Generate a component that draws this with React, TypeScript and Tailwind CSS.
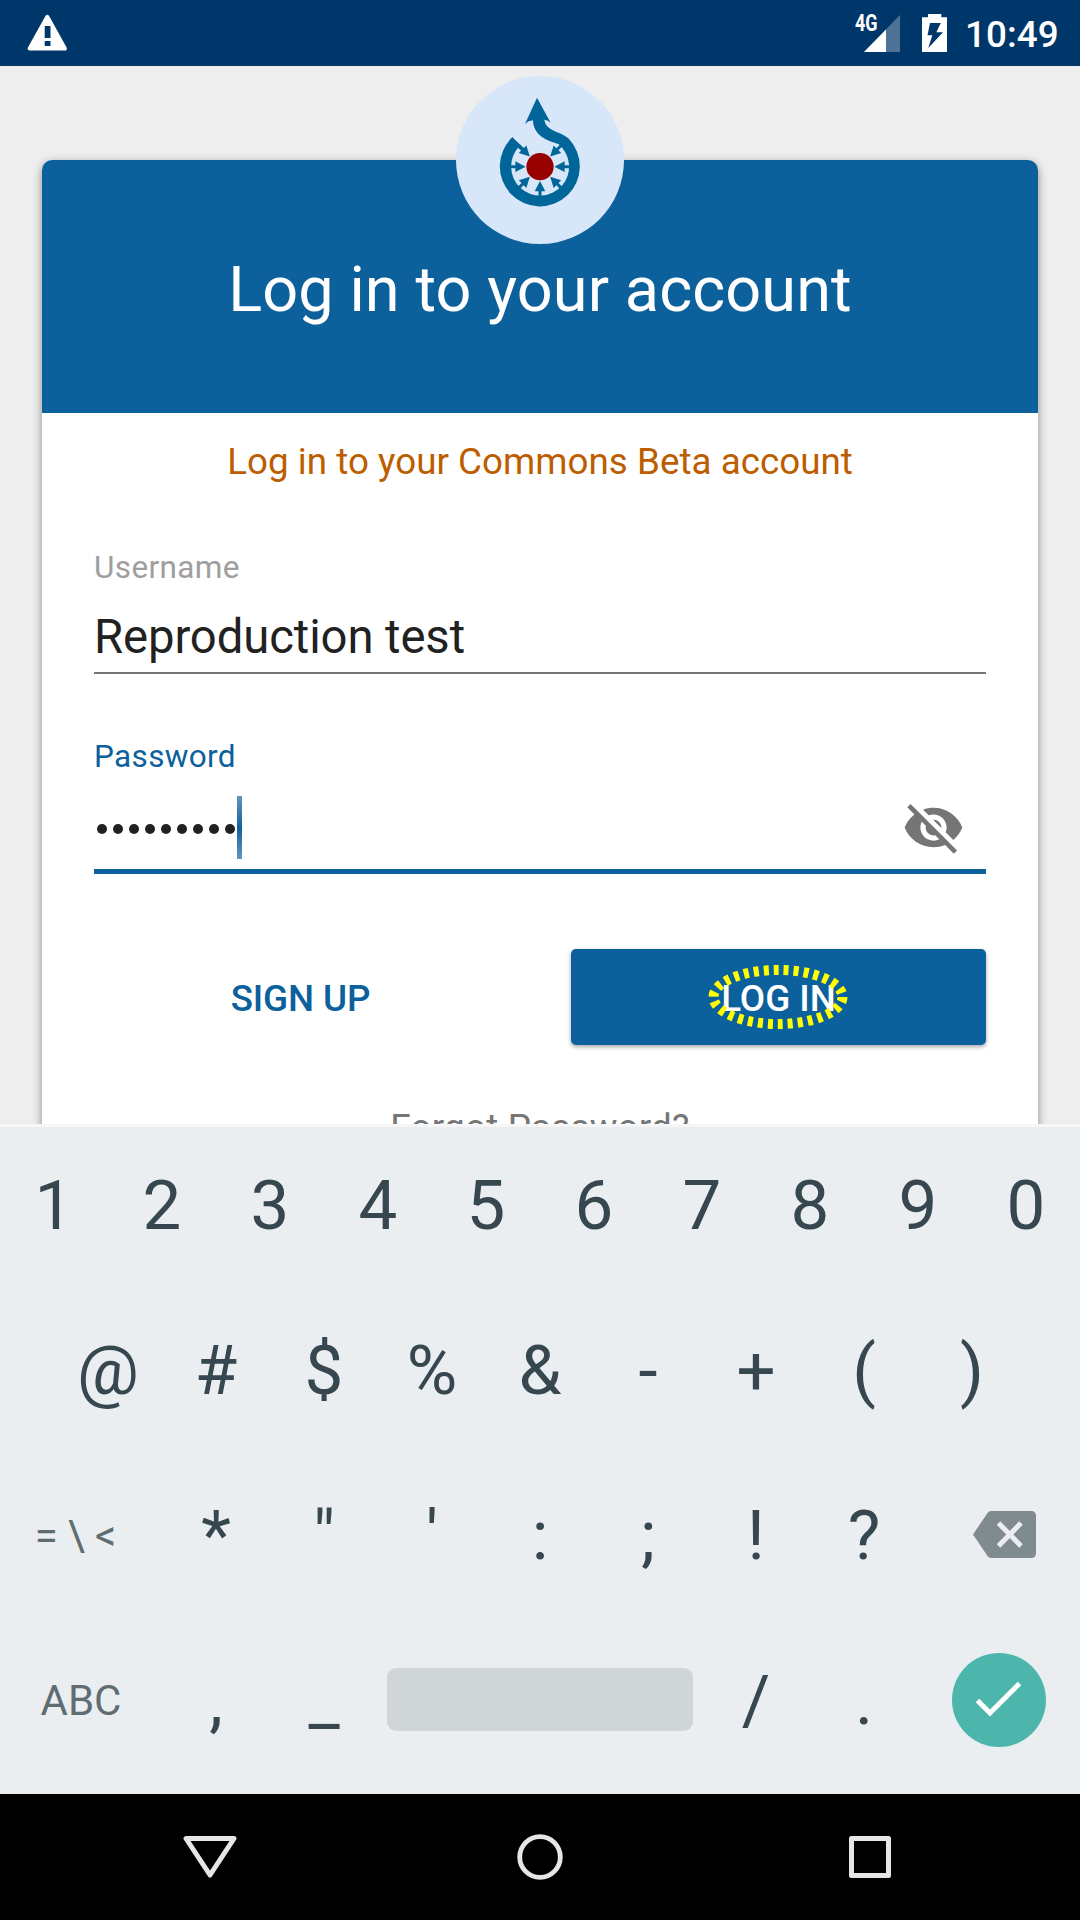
import React from "react";

function StatusBar() {
  return (
    <header className="flex h-[66px] shrink-0 items-start bg-[#00376b] text-white">
      <svg className="ml-[27px] mt-[14px] h-[37px] w-[41px]" viewBox="0 0 41 37">
        <path
          fillRule="evenodd"
          fill="#fff"
          d="M18.6 1.8 Q20.3 -0.4 22 1.8 L39.6 33.5 Q40.6 36.4 38 36.4 H2.8 Q-.2 36.4 .9 33.5Z M17.7 12 V24 H23.5 V12Z M17.7 27 V32 H23.5 V27Z"
        />
      </svg>
      <div className="relative ml-[796px] mt-[15px] h-[37px] w-[36px]">
        <svg className="h-[37px] w-[36px]" viewBox="0 0 36 37">
          <path d="M36 0V37H0Z" fill="#4f7397" />
          <path d="M22 14.5V37H0Z" fill="#fff" />
        </svg>
        <span className="absolute -left-[9px] -top-[3px] origin-left scale-x-[.78] text-[23px] font-bold leading-[24px]">
          4G
        </span>
      </div>
      <svg className="ml-[22px] mt-[14px] h-[38px] w-[25px]" viewBox="0 0 25 38">
        <path
          fillRule="evenodd"
          fill="#fff"
          d="M6 0H19.300V3.300H25V38H0V3.300H6Z M8 9L5.500 21.300H10.300L6.300 34L21 18.300H14.300L18.800 9Z"
        />
      </svg>
      <span className="ml-[18px] mt-[13px] text-[36.75px] font-medium leading-[44px] tracking-[0.1px]">
        10:49
      </span>
    </header>
  );
}

function CommonsLogo() {
  const angles = [0, 45, 135, 180, 225, -45, -90];
  return (
    <svg className="h-[168px] w-[168px]" viewBox="48 48 504 504">
      <circle cx="300" cy="300" r="252" fill="#d7e7f9" />
      <path
        fill="#006699"
        d="M217 232A120 120 0 1 0 385 235C358 211 318 215 313 179Q324 180 332 188L291 113L255 192Q265 182 279 181C280 226 320 242 355 252A87 87 0 1 1 238 259Z"
      />
      {angles.map((a) => (
        <path
          key={a}
          fill="#006699"
          transform={`rotate(${a} 300 320)`}
          d="M257 320L226 304V315.500H208V324.500H226V336Z"
        />
      ))}
      <path d="M217 232L252 265L245 274L210 240Z" fill="#006699" />
      <circle cx="300" cy="320" r="41" fill="#990000" />
    </svg>
  );
}

function LoginCard() {
  return (
    <main className="relative h-[1058px] shrink-0 overflow-hidden bg-[#eeeeee] px-[42px] pt-[94px]">
      <section className="h-[1100px] overflow-clip rounded-t-[10px] bg-white shadow-[0_3px_10px_rgba(0,0,0,0.42)]">
        <h1 className="h-[253px] bg-[#0c609c] pt-[98px] text-center text-[63px] leading-[64px] tracking-[0.1px] text-white">
          Log in to your account
        </h1>
        <form className="px-[52px]">
          <p className="mt-[27px] text-center text-[36.75px] leading-[44px] tracking-[0.03px] text-[#bc5e00]">
            Log in to your Commons Beta account
          </p>
          <div className="mt-[66px] text-[31.5px] leading-[36px] tracking-[0.35px] text-[#9e9e9e]">
            Username
          </div>
          <div className="mt-[23px] text-[47.25px] leading-[56px] tracking-[-0.1px] text-[#212121]">
            Reproduction test
          </div>
          <div className="mt-[7px] h-[2px] bg-[#757575]" />
          <div className="mt-[65px] text-[31.5px] leading-[36px] tracking-[0.35px] text-[#0c609c]">
            Password
          </div>
          <div className="mt-[21px] flex h-[63px] items-center">
            <div className="flex gap-[6px] pl-[3px] pt-[2px]">
              {Array.from({ length: 9 }, (_, i) => (
                <i key={i} className="size-[10px] rounded-full bg-[#212121]" />
              ))}
            </div>
            <div className="ml-[2px] h-[63px] w-[5px] bg-linear-to-b from-[#5f97c0] via-[#0c609c] to-[#5f97c0]" />
            <svg className="ml-auto mr-[21px] size-[63px]" viewBox="0 0 24 24" fill="#757575">
              <path d="M12 7c2.760 0 5 2.240 5 5 0 .65-.13 1.260-.36 1.830l2.920 2.920c1.510-1.260 2.700-2.890 3.430-4.750-1.730-4.390-6-7.500-11-7.500-1.400 0-2.740.25-3.980.7l2.160 2.160C10.740 7.130 11.350 7 12 7zM2 4.270l2.280 2.280.46.46C3.080 8.300 1.780 10.020 1 12c1.730 4.390 6 7.500 11 7.500 1.550 0 3.030-.3 4.380-.84l.42.42L19.730 22 21 20.730 3.270 3 2 4.270zM7.530 9.800l1.550 1.550c-.05.21-.08.43-.08.65 0 1.660 1.340 3 3 3 .22 0 .44-.03.65-.08l1.550 1.550c-.67.33-1.410.53-2.200.53-2.760 0-5-2.240-5-5 0-.79.2-1.530.53-2.200zm4.310-.78l3.150 3.150.02-.16c0-1.660-1.340-3-3-3l-.17.01z" />
            </svg>
          </div>
          <div className="mt-[10px] h-[5px] bg-[#0c609c]" />
          <div className="mt-[75px] flex h-[96px] justify-between text-[36.75px] font-medium leading-[99px]">
            <button type="button" className="w-[415px] pr-[2px] tracking-[-0.1px] text-[#0c609c]">
              SIGN UP
            </button>
            <button
              type="button"
              className="relative w-[415px] rounded-[5px] bg-[#0c609c] text-white shadow-[0_2px_4px_rgba(0,0,0,0.35)]"
            >
              LOG IN
              <svg className="absolute left-[136px] top-[15px] h-[66px] w-[142px]" viewBox="0 0 142 66">
                <ellipse
                  cx="71"
                  cy="33"
                  rx="64.500"
                  ry="27"
                  fill="none"
                  stroke="#ffff00"
                  strokeWidth="10"
                  strokeDasharray="5 5"
                />
              </svg>
            </button>
          </div>
          <p className="mt-[61px] text-center text-[36.75px] leading-[44px] tracking-[0.25px] text-[#757575]">
            Forgot Password?
          </p>
        </form>
      </section>
      <div className="absolute left-[456px] top-[10px]">
        <CommonsLogo />
      </div>
    </main>
  );
}

function Key({ label }: { label: string }) {
  return <button className="w-[108px] pb-[2px] text-center">{label}</button>;
}

const keyRow = "flex h-[165px] justify-center text-[69px] leading-[161px] text-[#37474f]";

function Keyboard() {
  return (
    <section className="h-[670px] shrink-0 bg-[#eaeef1] shadow-[inset_0_3px_0_#f4f6f8]">
      <div className={keyRow}>
        {"1234567890".split("").map((k) => (
          <Key key={k} label={k} />
        ))}
      </div>
      <div className={keyRow}>
        {"@#$%&-+()".split("").map((k) => (
          <Key key={k} label={k} />
        ))}
      </div>
      <div className={keyRow}>
        <button className="w-[162px] pr-[1px] pb-[2px] text-center text-[42px] tracking-[10px] text-[#5f6d73]">
          =\&lt;
        </button>
        {"*\"':;!?".split("").map((k) => (
          <Key key={k} label={k} />
        ))}
        <div className="flex w-[162px] justify-center">
          <svg className="ml-[11px] mt-[57px] h-[47px] w-[63px]" viewBox="0 0 63 47">
            <path
              fill="#808b90"
              d="M18 0H58Q63 0 63 5V42Q63 47 58 47H18Q16 47 14.500 45L0 23.500L14.500 2Q16 0 18 0Z"
            />
            <path d="M25.500 12L48 35M48 12L25.500 35" stroke="#eaeef1" strokeWidth="5" />
          </svg>
        </div>
      </div>
      <div className={keyRow}>
        <button className="w-[162px] pb-[2px] text-center text-[42px] text-[#5f6d73]">ABC</button>
        <Key label="," />
        <Key label="_" />
        <div className="flex w-[324px] justify-center">
          <div className="mt-[49px] h-[63px] w-[306px] rounded-[9px] bg-[#d0d5d8]" />
        </div>
        <Key label="/" />
        <Key label="." />
        <div className="flex w-[162px] justify-center">
          <svg className="mt-[34px] h-[94px] w-[94px]" viewBox="0 0 94 94">
            <circle cx="47" cy="47" r="47" fill="#4db6ac" />
            <path d="M25.500 47.500L38 60L67.500 30.500" fill="none" stroke="#fff" strokeWidth="5" />
          </svg>
        </div>
      </div>
    </section>
  );
}

function NavBar() {
  return (
    <nav className="flex h-[126px] shrink-0 items-center bg-black px-[183px]">
      <svg className="h-[46px] w-[54px]" viewBox="0 0 54 46" fill="none" stroke="#e6e6e6">
        <path d="M3 4.500H51L27 41Z" strokeWidth="5" strokeLinejoin="round" />
      </svg>
      <svg className="ml-[280px] h-[46px] w-[46px]" viewBox="0 0 46 46" fill="none" stroke="#e6e6e6">
        <circle cx="23" cy="23" r="20.300" strokeWidth="4.800" />
      </svg>
      <svg className="ml-[286px] h-[46px] w-[42px]" viewBox="0 0 42 46" fill="none" stroke="#e6e6e6">
        <rect x="2.500" y="4.500" width="37" height="37" strokeWidth="5" strokeLinejoin="round" />
      </svg>
    </nav>
  );
}

export default function App() {
  return (
    <div className="flex h-[1920px] w-[1080px] flex-col overflow-hidden font-['Roboto',sans-serif]">
      <StatusBar />
      <LoginCard />
      <Keyboard />
      <NavBar />
    </div>
  );
}
